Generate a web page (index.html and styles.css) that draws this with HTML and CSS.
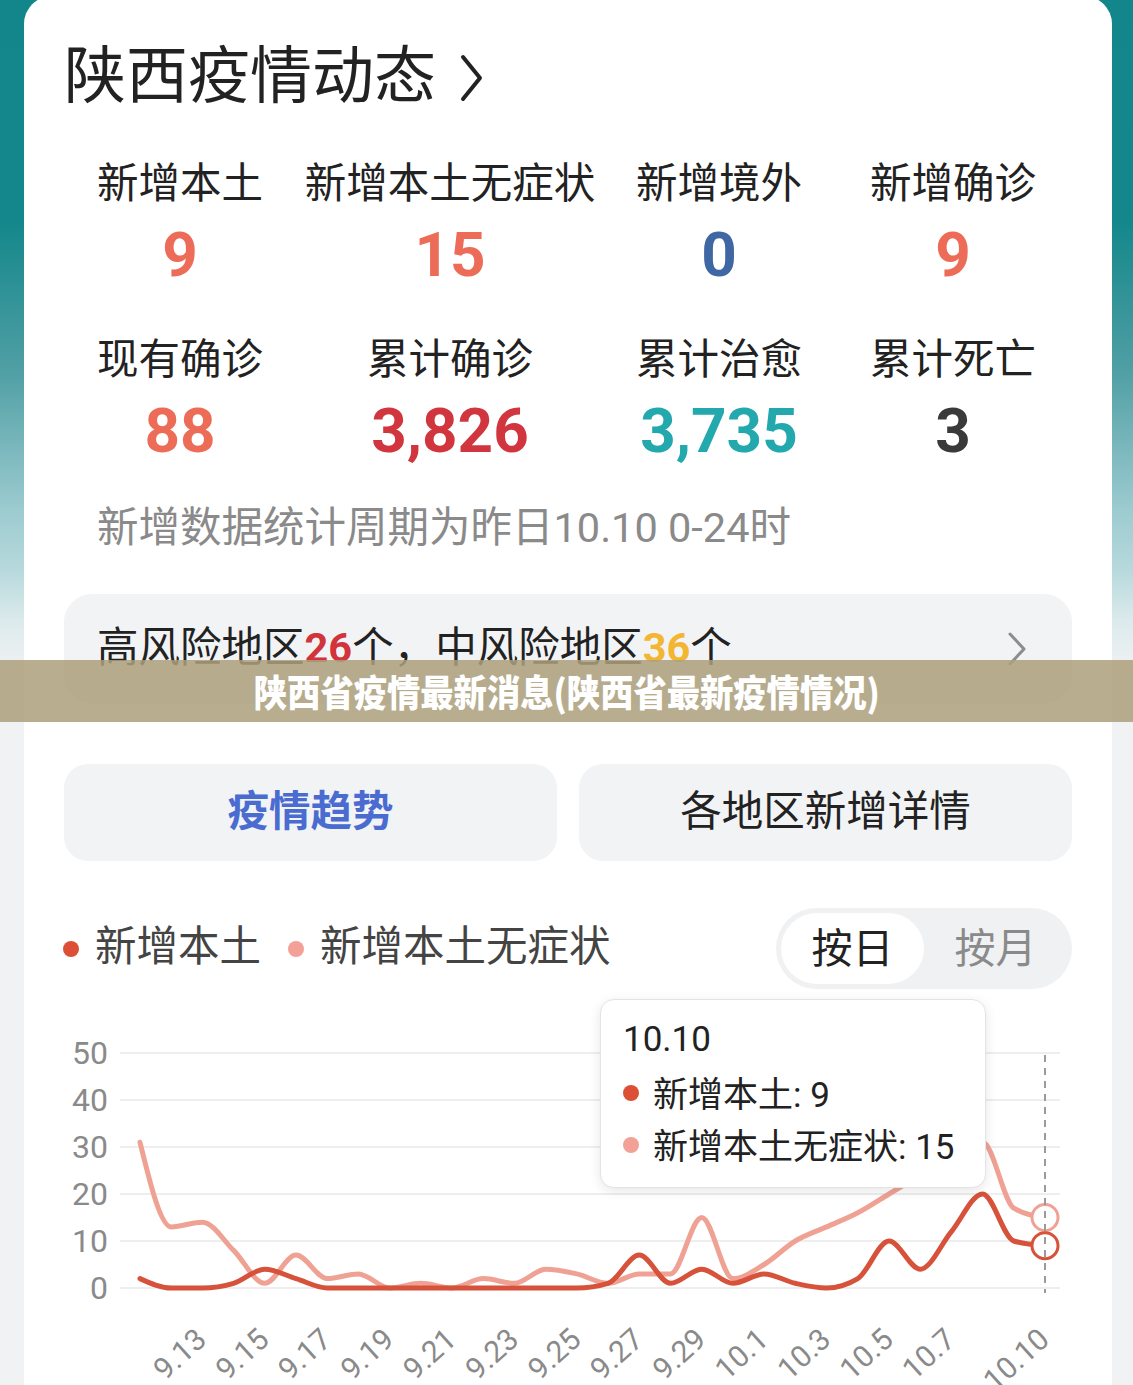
FILE: index.html
```html
<!DOCTYPE html>
<html lang="zh-CN">
<head>
<meta charset="utf-8">
<title>陕西疫情动态</title>
<link rel="stylesheet" href="styles.css">
</head>
<body>
<main class="card">
  <h1 class="title">陕西疫情动态<svg class="title-chev" viewBox="0 0 26 50" width="26" height="50"><path d="M5 4 L22 25 L5 46"/></svg></h1>

  <section class="stats">
    <div class="stat"><div class="label">新增本土</div><div class="num coral">9</div></div>
    <div class="stat"><div class="label">新增本土无症状</div><div class="num coral">15</div></div>
    <div class="stat"><div class="label">新增境外</div><div class="num blue">0</div></div>
    <div class="stat"><div class="label">新增确诊</div><div class="num coral">9</div></div>
    <div class="stat"><div class="label">现有确诊</div><div class="num coral">88</div></div>
    <div class="stat"><div class="label">累计确诊</div><div class="num red">3,826</div></div>
    <div class="stat"><div class="label">累计治愈</div><div class="num teal">3,735</div></div>
    <div class="stat"><div class="label">累计死亡</div><div class="num dark">3</div></div>
  </section>

  <p class="note">新增数据统计周期为昨日10.10 0-24时</p>

  <div class="risk">
    <span class="risk-text">高风险地区<b class="hi">26</b>个，中风险地区<b class="mid">36</b>个</span>
    <svg class="risk-chev" viewBox="0 0 20 36" width="20" height="36"><path d="M3 3 L17 18 L3 33"/></svg>
  </div>

  <div class="tabs">
    <div class="tab active">疫情趋势</div>
    <div class="tab">各地区新增详情</div>
  </div>

  <div class="chart-head">
    <div class="legend">
      <span class="dot dot-red"></span><span class="legend-text">新增本土</span>
      <span class="dot dot-pink"></span><span class="legend-text">新增本土无症状</span>
    </div>
    <div class="toggle">
      <span class="opt on">按日</span>
      <span class="opt">按月</span>
    </div>
  </div>

  <div class="chart">
    <svg class="chart-svg" viewBox="24 1000 1088 385" width="1088" height="385">
      <g class="grid">
        <line x1="120" x2="1060" y1="1052" y2="1052"/>
        <line x1="120" x2="1060" y1="1099" y2="1099"/>
        <line x1="120" x2="1060" y1="1146" y2="1146"/>
        <line x1="120" x2="1060" y1="1193" y2="1193"/>
        <line x1="120" x2="1060" y1="1240" y2="1240"/>
        <line x1="120" x2="1060" y1="1287" y2="1287"/>
      </g>
      <g class="ylab">
        <text x="108" y="1063">50</text>
        <text x="108" y="1110">40</text>
        <text x="108" y="1157">30</text>
        <text x="108" y="1204">20</text>
        <text x="108" y="1251">10</text>
        <text x="108" y="1298">0</text>
      </g>
      <g class="xlab" id="xlab"></g>
      <path id="line-pink" class="line pink" d=""/>
      <path id="line-red" class="line red" d=""/>
      <circle class="pt pink" cx="1045" cy="1216.5" r="13"/>
      <circle class="pt red" cx="1045" cy="1244.7" r="13"/>
      <line class="pointer" x1="1045" x2="1045" y1="1054" y2="1292"/>
    </svg>
    <div class="tooltip">
      <div class="tip-row tip-date">10.10</div>
      <div class="tip-row"><span class="dot dot-red"></span>新增本土: 9</div>
      <div class="tip-row"><span class="dot dot-pink"></span>新增本土无症状: 15</div>
    </div>
  </div>
</main>

<div class="banner"><span class="banner-text">陕西省疫情最新消息(陕西省最新疫情情况)</span></div>

<script src="script.js"></script>
</body>
</html>
```

FILE: styles.css
```css
html, body {
  margin: 0;
  padding: 0;
  overflow: hidden;
}

body {
  width: 1133px;
  height: 1385px;
  position: relative;
  font-family: Roboto, "Noto Sans CJK SC", "Noto Sans", sans-serif;
  color: #222;
  background: linear-gradient(180deg,
    #12868a 0px, #13878b 220px, #4f9fa4 370px, #9ccbd0 510px,
    #b7d9dc 570px, #dbeaec 620px, #eef1f3 665px, #f1f2f4 720px, #f1f2f4 100%);
}

.card {
  margin: -4px 0 0 24px;
  width: 1088px;
  height: 1420px;
  box-sizing: border-box;
  padding: 41px 40px 0 40px;
  background: #fff;
  border-radius: 28px 28px 0 0;
}

.title {
  margin: 0;
  display: flex;
  align-items: center;
  height: 80px;
  font-size: 62px;
  line-height: 80px;
  font-weight: 400;
  color: #222;
}

.title-chev {
  margin-left: 22px;
  margin-top: 2px;
}
.title-chev path {
  fill: none;
  stroke: #222;
  stroke-width: 4;
  stroke-linecap: round;
  stroke-linejoin: round;
}

.stats {
  margin-top: 42px;
  display: grid;
  grid-template-columns: 232px 308px 230px 238px;
  row-gap: 45px;
}

.stat {
  display: flex;
  flex-direction: column;
  align-items: center;
}

.label {
  font-size: 41.5px;
  line-height: 50px;
  color: #222;
  white-space: nowrap;
}

.num {
  margin-top: 11px;
  font-family: Roboto, sans-serif;
  font-weight: 700;
  font-size: 62px;
  line-height: 70px;
}
.coral { color: #ec6c57; }
.blue { color: #3f67a3; }
.red { color: #d1363e; }
.teal { color: #22a8ad; }
.dark { color: #3a3a3a; }

.note {
  margin: 37px 0 0 0;
  padding-left: 33px;
  font-size: 41.5px;
  line-height: 50px;
  color: #8a8a8a;
  white-space: nowrap;
}

.risk {
  margin-top: 41px;
  height: 110px;
  box-sizing: border-box;
  padding: 0 45px 0 33px;
  border-radius: 28px;
  background: #f2f3f5;
  display: flex;
  align-items: center;
  justify-content: space-between;
}

.risk-text {
  font-size: 41.5px;
  line-height: 50px;
  color: #222;
  margin-top: -2px;
}
.risk-text b {
  font-family: Roboto, sans-serif;
  font-weight: 700;
}
.risk-text .hi { color: #d1343b; }
.risk-text .mid { color: #f2b632; }

.risk-chev path {
  fill: none;
  stroke: #8d8d8d;
  stroke-width: 3;
  stroke-linecap: round;
  stroke-linejoin: round;
}

.tabs {
  margin-top: 60px;
  display: grid;
  grid-template-columns: 1fr 1fr;
  column-gap: 22px;
}

.tab {
  height: 97px;
  box-sizing: border-box;
  padding-bottom: 9px;
  border-radius: 24px;
  background: #f2f3f5;
  display: flex;
  align-items: center;
  justify-content: center;
  font-size: 41.5px;
  color: #222;
}
.tab.active {
  color: #4a6bd0;
  font-weight: 700;
}

.chart-head {
  margin-top: 47px;
  height: 81px;
  display: flex;
  align-items: center;
  justify-content: space-between;
}

.legend {
  display: flex;
  align-items: center;
  margin-top: -3px;
}
.legend-text {
  font-size: 41.5px;
  line-height: 50px;
  color: #444;
}
.legend .dot-red {
  margin-left: -1px;
  margin-right: 16px;
  margin-top: 4px;
}
.legend .dot-pink {
  margin-left: 27px;
  margin-right: 16px;
  margin-top: 4px;
}

.dot {
  display: inline-block;
  width: 16px;
  height: 16px;
  border-radius: 50%;
  flex: none;
}
.dot-red { background: #dd4f35; }
.dot-pink { background: #f3a196; }

.toggle {
  display: flex;
  padding: 5px;
  border-radius: 41px;
  background: #f0f1f3;
}
.opt {
  width: 143px;
  height: 71px;
  box-sizing: border-box;
  padding-bottom: 7px;
  border-radius: 36px;
  display: flex;
  align-items: center;
  justify-content: center;
  font-size: 41px;
  color: #8a8a8a;
}
.opt.on {
  background: #fff;
  color: #222;
}

.chart {
  position: relative;
  margin-top: 12px;
}

.chart-svg {
  display: block;
  margin-left: -40px;
}

.grid line {
  stroke: #eeeeee;
  stroke-width: 2;
}

.ylab text {
  font-family: Roboto, sans-serif;
  font-size: 32px;
  fill: #8a8a8a;
  text-anchor: end;
}

.xlab text {
  font-family: Roboto, sans-serif;
  font-size: 30px;
  fill: #8a8a8a;
  text-anchor: end;
}

.line {
  fill: none;
  stroke-width: 5;
  stroke-linecap: round;
  stroke-linejoin: round;
}
.line.red { stroke: #d6523a; }
.line.pink { stroke: #efa294; }

.pt {
  fill: #fff;
  stroke-width: 3;
}
.pt.red { stroke: #d6523a; }
.pt.pink { stroke: #efa294; }

.pointer {
  stroke: #9a9a9a;
  stroke-width: 2;
  stroke-dasharray: 7 6;
}

.tooltip {
  position: absolute;
  left: 536px;
  top: -2px;
  width: 386px;
  height: 189px;
  box-sizing: border-box;
  padding: 13px 0 0 22px;
  background: #fff;
  border: 1px solid #e4e4e4;
  border-radius: 14px;
  box-shadow: 0 3px 12px rgba(0, 0, 0, 0.10);
}

.tip-row {
  display: flex;
  align-items: center;
  height: 52px;
  font-size: 35px;
  color: #222;
  white-space: nowrap;
}
.tip-row .dot {
  margin-right: 14px;
  margin-top: 3px;
}

.banner {
  position: absolute;
  left: 0;
  top: 660px;
  width: 1133px;
  height: 62px;
  background: rgba(172, 160, 124, 0.86);
  display: flex;
  align-items: center;
  justify-content: center;
}

.banner-text {
  display: inline-block;
  color: #fff;
  font-family: "Noto Sans CJK SC", sans-serif;
  font-weight: 900;
  font-size: 37px;
  line-height: 62px;
  transform: scaleX(0.9);
  white-space: nowrap;
}
```

FILE: script.js
```js
(function () {
  var NS = 'http://www.w3.org/2000/svg';
  var X0 = 140, X1 = 1045, N = 30;
  var DX = (X1 - X0) / (N - 1);
  var Y0 = 1287, K = 4.7;

  var red = [2, 0, 0, 1, 4, 2, 0, 0, 0, 0, 0, 0, 0, 0, 0, 1, 7, 1, 4, 1, 3, 1, 0, 2, 10, 4, 12, 20, 10, 9];
  var pink = [31, 13, 14, 8, 1, 7, 2, 3, 0, 1, 0, 2, 1, 4, 3, 1, 3, 3, 15, 2, 5, 10, 13, 16, 20, 24, 28, 31, 17, 15];

  function monotonePath(vals) {
    var pts = vals.map(function (v, i) { return [X0 + DX * i, Y0 - v * K]; });
    var n = pts.length, h = DX;
    var s = [], t = [];
    for (var i = 0; i < n - 1; i++) s.push((pts[i + 1][1] - pts[i][1]) / h);
    for (i = 1; i < n - 1; i++) {
      var s0 = s[i - 1], s1 = s[i];
      var p = (s0 + s1) / 2;
      var sg = (Math.sign(s0) + Math.sign(s1));
      t[i] = sg === 0 ? 0 : sg * Math.min(Math.abs(s0), Math.abs(s1), 0.5 * Math.abs(p));
    }
    t[0] = (3 * s[0] - t[1]) / 2;
    t[n - 1] = (3 * s[n - 2] - t[n - 2]) / 2;
    var d = 'M' + pts[0][0].toFixed(1) + ' ' + pts[0][1].toFixed(1);
    for (i = 0; i < n - 1; i++) {
      var a = pts[i], b = pts[i + 1];
      d += ' C' + (a[0] + h / 3).toFixed(1) + ' ' + (a[1] + h / 3 * t[i]).toFixed(1) +
           ' ' + (b[0] - h / 3).toFixed(1) + ' ' + (b[1] - h / 3 * t[i + 1]).toFixed(1) +
           ' ' + b[0].toFixed(1) + ' ' + b[1].toFixed(1);
    }
    return d;
  }

  document.getElementById('line-red').setAttribute('d', monotonePath(red));
  document.getElementById('line-pink').setAttribute('d', monotonePath(pink));

  var labels = [[2, '9.13'], [4, '9.15'], [6, '9.17'], [8, '9.19'], [10, '9.21'], [12, '9.23'], [14, '9.25'],
    [16, '9.27'], [18, '9.29'], [20, '10.1'], [22, '10.3'], [24, '10.5'], [26, '10.7'], [29, '10.10']];
  var g = document.getElementById('xlab');
  labels.forEach(function (l) {
    var x = X0 + DX * l[0] + 6;
    var t = document.createElementNS(NS, 'text');
    t.setAttribute('transform', 'translate(' + x.toFixed(1) + ',1341) rotate(-42)');
    t.textContent = l[1];
    g.appendChild(t);
  });
})();
```
